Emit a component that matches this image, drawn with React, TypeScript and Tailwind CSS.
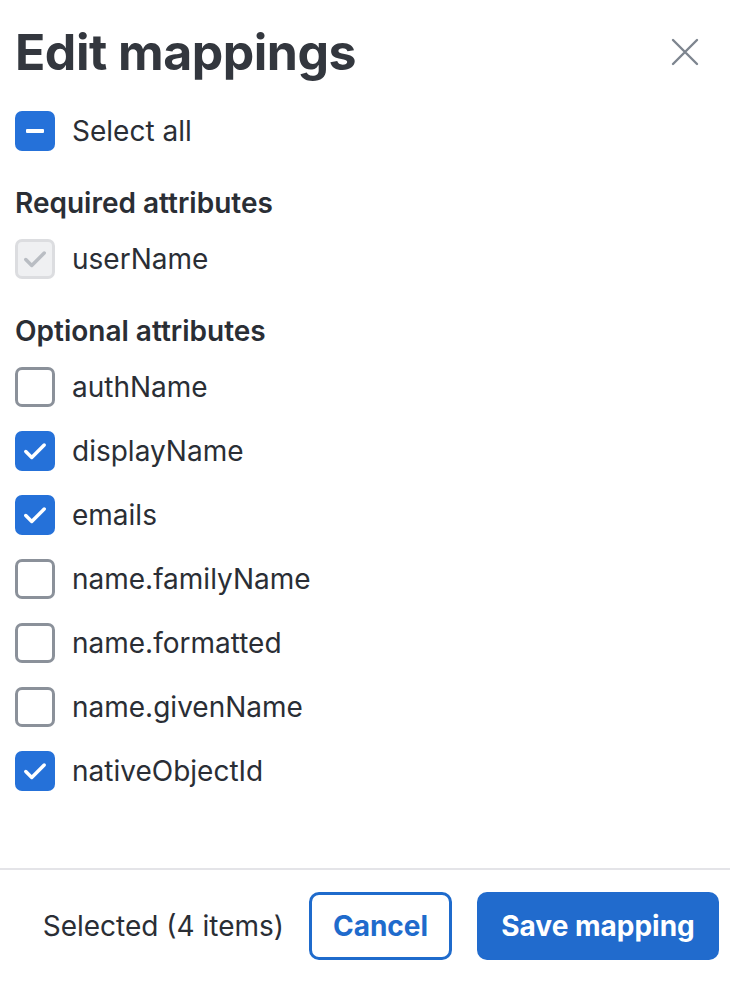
import React from "react"

type Item = { label: string; checked: boolean }

const optional: Item[] = [
  { label: "authName", checked: false },
  { label: "displayName", checked: true },
  { label: "emails", checked: true },
  { label: "name.familyName", checked: false },
  { label: "name.formatted", checked: false },
  { label: "name.givenName", checked: false },
  { label: "nativeObjectId", checked: true },
]

function Check({ color }: { color: string }) {
  return (
    <svg width="26" height="26" viewBox="0 0 24 24" fill="none" stroke={color} strokeWidth="3.2" strokeLinecap="round" strokeLinejoin="round">
      <path d="M3.5 12.5l5.5 5.5L20.5 6.5" />
    </svg>
  )
}

function Box({ state }: { state: "on" | "off" | "mixed" | "disabled" }) {
  if (state === "off") {
    return <div className="w-10 h-10 shrink-0 rounded-[7px] border-[3px] border-[#8b919a] bg-white" />
  }
  if (state === "disabled") {
    return (
      <div className="w-10 h-10 shrink-0 rounded-[7px] border-[3px] border-[#dcdde0] bg-[#eff0f2] flex items-center justify-center">
        <Check color="#b9bdc3" />
      </div>
    )
  }
  return (
    <div className="w-10 h-10 shrink-0 rounded-[7px] bg-[#2571d9] flex items-center justify-center">
      {state === "mixed" ? <div className="w-[18px] h-[4px] bg-white rounded-[1px]" /> : <Check color="#ffffff" />}
    </div>
  )
}

function Row({ label, state }: { label: string; state: "on" | "off" | "mixed" | "disabled" }) {
  return (
    <div className="flex items-center gap-[17px] h-16">
      <Box state={state} />
      <span className="text-[28px] text-[#2a2e35]">{label}</span>
    </div>
  )
}

export default function App() {
  return (
    <div className="w-[730px] h-[981px] bg-white flex flex-col text-[#2a2e35]" style={{ fontFamily: "Inter, 'Noto Sans', sans-serif" }}>
      <div className="flex-1 px-[15px]">
        <div className="flex items-center justify-between pt-[20px] mb-[15px]">
          <h1 className="text-[50px] font-bold tracking-[-0.5px] text-[#33373e] leading-[64px]">Edit mappings</h1>
          <button className="mr-[16px] text-[#7d858f]">
            <svg width="28" height="28" viewBox="0 0 28 28" fill="none" stroke="currentColor" strokeWidth="2.4" strokeLinecap="round">
              <path d="M2 2l24 24M26 2L2 26" />
            </svg>
          </button>
        </div>
        <Row label="Select all" state="mixed" />
        <h2 className="text-[28px] font-semibold mt-[16px] leading-[48px]">Required attributes</h2>
        <Row label="userName" state="disabled" />
        <h2 className="text-[28px] font-semibold mt-[16px] leading-[48px]">Optional attributes</h2>
        {optional.map((it) => (
          <Row key={it.label} label={it.label} state={it.checked ? "on" : "off"} />
        ))}
      </div>
      <div className="border-t-2 border-[#e4e4e8] h-[113px] flex items-center justify-end gap-[25px] pr-[11px]">
        <span className="text-[28px] text-[#2a2e35]">Selected (4 items)</span>
        <button className="h-[68px] w-[143px] rounded-[10px] border-[3px] border-[#1f6bcc] text-[#1f6bcc] text-[28px] font-bold">Cancel</button>
        <button className="h-[68px] w-[242px] rounded-[10px] bg-[#216bcd] text-white text-[28px] font-bold">Save mapping</button>
      </div>
    </div>
  )
}
